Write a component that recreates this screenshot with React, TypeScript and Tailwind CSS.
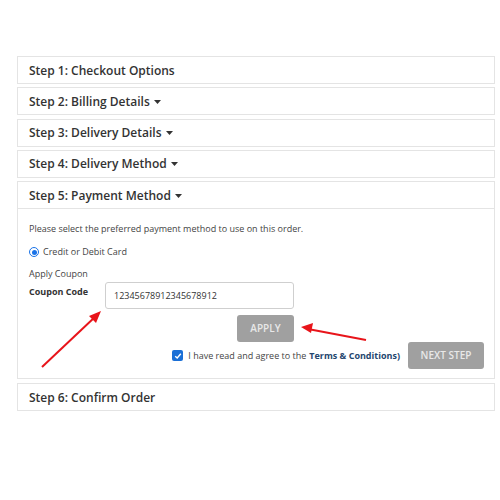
import React from "react";

const Caret = () => (
  <svg width="7" height="4" viewBox="0 0 7 4" className="ml-[4px] inline-block">
    <path d="M0 0 L7 0 L3.5 4 Z" fill="#333" />
  </svg>
);

const Header = ({ title, caret, extra }: { title: string; caret?: boolean; extra?: string }) => (
  <div className={"h-[28px] border border-[#e4e4e4] bg-white flex items-center pl-[11px] pt-[1px] text-[12px] font-semibold text-[#333] " + (extra ?? "")}>
    <span>{title}</span>
    {caret && <Caret />}
  </div>
);

export default function App() {
  return (
    <div
      className="relative w-[500px] h-[500px] bg-white overflow-hidden"
      style={{ fontFamily: '"Open Sans", "Liberation Sans", sans-serif' }}
    >
      <div className="pt-[56px] pl-[17px] w-[495px] flex flex-col gap-[3.3px]">
        <Header title="Step 1: Checkout Options" />
        <Header title="Step 2: Billing Details" caret />
        <Header title="Step 3: Delivery Details" caret />
        <Header title="Step 4: Delivery Method" caret />
        <div className="border border-[#e4e4e4] bg-white">
          <div className="h-[27px] border-b border-[#e4e4e4] flex items-center pl-[11px] pt-[1px] text-[12px] font-semibold text-[#333]">
            <span>Step 5: Payment Method</span>
            <Caret />
          </div>
          <div className="pl-[11px] pr-[10px] pt-[14px] pb-[9px] text-[9px] text-[#444]">
            <div className="h-[12px] leading-[12px]">
              Please select the preferred payment method to use on this order.
            </div>
            <div className="mt-[11px] flex items-center h-[12px]">
              <span className="w-[10px] h-[10px] rounded-full border-[1.5px] border-[#1a73e8] flex items-center justify-center">
                <span className="w-[5px] h-[5px] rounded-full bg-[#1a73e8]" />
              </span>
              <span className="ml-[4px]">Credit or Debit Card</span>
            </div>
            <div className="mt-[10px] h-[12px] leading-[12px]">Apply Coupon</div>
            <div className="mt-[2px] flex items-start">
              <div className="w-[76px] pt-[3px] font-bold text-[#333]">Coupon Code</div>
              <div className="w-[189px] h-[27px] border border-[#cfcfcf] rounded-[3px] flex items-center pl-[8px] text-[9px] text-[#333]">
                12345678912345678912
              </div>
            </div>
            <div className="mt-[6px] ml-[208px] w-[57px] h-[27px] rounded-[3px] bg-[#a0a0a0] text-[#e8e8e8] text-[10px] font-semibold flex items-center justify-center">
              APPLY
            </div>
            <div className="flex items-center justify-end">
              <span className="w-[11px] h-[11px] rounded-[2px] bg-[#1a6fd6] flex items-center justify-center">
                <svg width="8" height="8" viewBox="0 0 8 8">
                  <path d="M1.2 4.2 L3.2 6 L6.8 1.8" stroke="white" strokeWidth="1.4" fill="none" />
                </svg>
              </span>
              <span className="ml-[5px]">I have read and agree to the </span>
              <span className="ml-[3px] font-bold text-[#24466e]">Terms &amp; Conditions</span>
              <span className="font-bold text-[#24466e]">)</span>
              <div className="ml-[8px] w-[76px] h-[27px] rounded-[3px] bg-[#a0a0a0] text-[#e8e8e8] text-[10px] font-semibold flex items-center justify-center">
                NEXT STEP
              </div>
            </div>
          </div>
        </div>
        <Header title="Step 6: Confirm Order" extra="mt-[1px]" />
      </div>
      <svg className="absolute left-0 top-0 pointer-events-none" width="500" height="500">
        <line x1="42" y1="367" x2="96" y2="316" stroke="#e8141a" strokeWidth="2" />
        <path d="M101 311 L89 316 L96 323 Z" fill="#e8141a" />
        <line x1="366" y1="340" x2="308" y2="329" stroke="#e8141a" strokeWidth="2" />
        <path d="M301 327 L313 323 L311 333 Z" fill="#e8141a" />
      </svg>
    </div>
  );
}
